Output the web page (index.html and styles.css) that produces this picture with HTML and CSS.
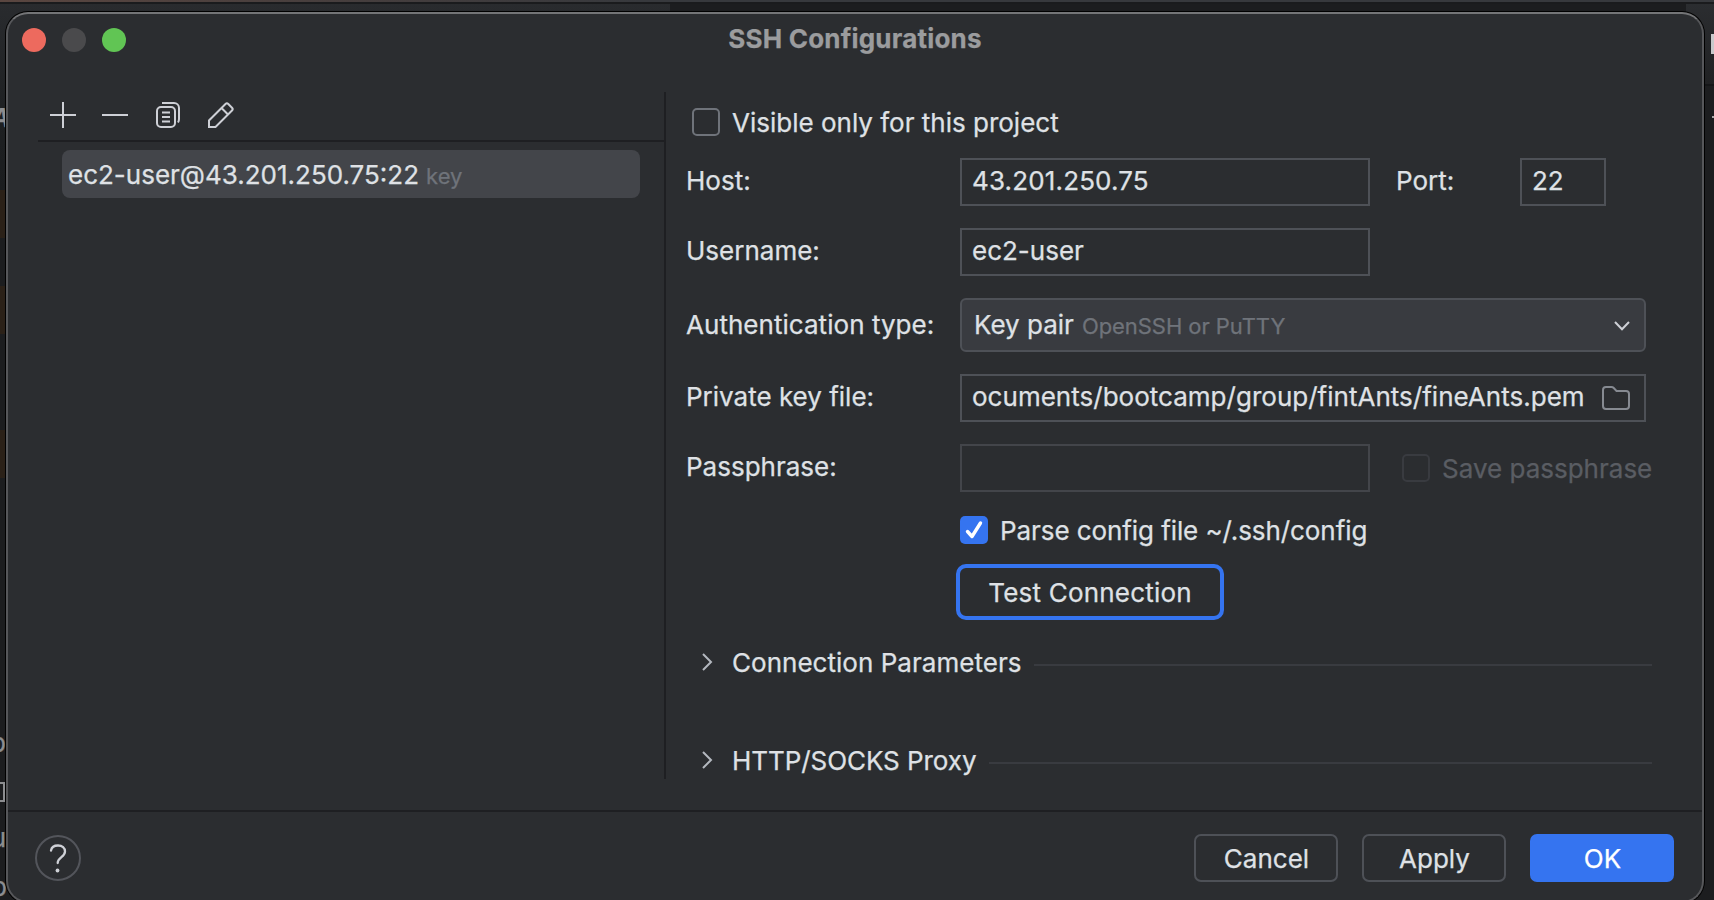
FILE: index.html
```html
<!DOCTYPE html>
<html lang="en">
<head>
<meta charset="utf-8">
<title>SSH Configurations</title>
<link rel="stylesheet" href="styles.css">
</head>
<body>
<div class="backdrop">
  <div class="strip"></div>
  <div class="pane pane-left"></div>
  <div class="pane pane-right"></div>
  <div class="mark mark-1"></div>
  <div class="mark mark-2"></div>
  <div class="mark mark-3"></div>
  <span class="frag frag-a">A</span>
  <span class="frag frag-p">p</span>
  <span class="frag-box"></span>
  <span class="frag frag-u">u</span>
  <span class="frag frag-o">p</span>
  <span class="frag-e"></span>
  <span class="frag-line"></span>
  <span class="frag-dash"></span>
</div>

<div class="window">
  <header class="titlebar">
    <div class="lights"><i class="light red"></i><i class="light grey"></i><i class="light green"></i></div>
    <h1 class="title">SSH Configurations</h1>
  </header>

  <div class="main">
    <aside class="sidebar">
      <div class="toolbar">
        <svg class="tool" viewBox="0 0 32 32"><path d="M16 3v26M3 16h26"/></svg>
        <svg class="tool" viewBox="0 0 32 32"><path d="M3 16h26"/></svg>
        <svg class="tool" viewBox="0 0 32 32"><rect x="5" y="8" width="18" height="20" rx="4"/><path d="M10 4h12a5 5 0 0 1 5 5v11q0 2-1 3.500M10 13.500h8M10 18h8M10 22.500h8"/></svg>
        <svg class="tool" viewBox="0 0 32 32"><path d="M5 28v-6.500L21.500 5a2 2 0 0 1 2.800 0L28 8.700a2 2 0 0 1 0 2.800L11.500 28zM17.500 9l6.500 6.500"/></svg>
      </div>
      <div class="item"><span class="item-name">ec2-user@43.201.250.75:22</span><span class="hint item-hint">key</span></div>
    </aside>

    <section class="form">
      <label class="check visible-check"><span class="box"></span><span class="t-visible">Visible only for this project</span></label>

      <div class="row">
        <span class="label">Host:</span><div class="field medium host">43.201.250.75</div>
        <span class="label port-label">Port:</span><div class="field port">22</div>
      </div>
      <div class="row"><span class="label">Username:</span><div class="field medium">ec2-user</div></div>
      <div class="row combo-row">
        <span class="label combo-label">Authentication type:</span>
        <div class="combo"><span>Key pair</span><span class="hint combo-hint">OpenSSH or PuTTY</span>
          <svg class="chevron-down" viewBox="0 0 18 12"><path d="M2 2l7 7.300L16 2"/></svg></div>
      </div>
      <div class="row">
        <span class="label">Private key file:</span>
        <div class="field wide"><span class="path">ocuments/bootcamp/group/fintAnts/fineAnts.pem</span>
          <svg class="folder" viewBox="0 0 28 24"><path d="M1 4a3 3 0 0 1 3-3h5.500q1.200 0 2 .8L14.500 5H24a3 3 0 0 1 3 3v12a3 3 0 0 1-3 3H4a3 3 0 0 1-3-3z"/></svg></div>
      </div>
      <div class="row">
        <span class="label">Passphrase:</span><div class="field medium disabled"></div>
        <label class="check save-check"><span class="box"></span><span class="t-save">Save passphrase</span></label>
      </div>
      <label class="check parse-check"><span class="box checked"><svg viewBox="0 0 28 28"><path d="M7.500 15.500l4.500 5L20.500 7"/></svg></span><span class="t-parse">Parse config file ~/.ssh/config</span></label>
      <button class="test">Test Connection</button>

      <div class="group"><svg class="chevron" viewBox="0 0 12 20"><path d="M2 2l8 8-8 8"/></svg><span class="group-name">Connection Parameters</span><i class="rule"></i></div>
      <div class="group second"><svg class="chevron" viewBox="0 0 12 20"><path d="M2 2l8 8-8 8"/></svg><span class="group-name">HTTP/SOCKS Proxy</span><i class="rule"></i></div>
    </section>
  </div>

  <footer class="footer">
    <svg class="help" viewBox="0 0 46 46"><circle cx="23" cy="23" r="22"/><path d="M16 15.500c.6-3.300 3.200-5 7-5 4.200 0 7 2.500 7 6 0 5.500-7.300 5.800-7.300 11.500"/><circle class="dot" cx="22.500" cy="35.500" r="1.900"/></svg>
    <div class="buttons"><button class="btn">Cancel</button><button class="btn">Apply</button><button class="btn primary">OK</button></div>
  </footer>
</div>
</body>
</html>
```
FILE: styles.css
```css
* { box-sizing: border-box; }
body {
  margin: 0;
  width: 1714px;
  height: 900px;
  overflow: hidden;
  position: relative;
  background: #1c1d1f;
  color: #dfe1e5;
  font: 26px/32px Inter, "Liberation Sans", sans-serif;
  -webkit-text-stroke: 0.25px currentColor;
}
svg { display: block; fill: none; flex: none; }
h1, button { margin: 0; font: inherit; color: inherit; }

/* Editor showing around the dialog */
.backdrop { position: absolute; inset: 0; overflow: hidden; }
.backdrop > * { position: absolute; }
.strip { left: 0; top: 0; width: 1714px; height: 4px; border-bottom: 2px solid #1a1b1d; background: linear-gradient(90deg, #5a4640 0, #4b403e 250px, #37393d 640px, #37393d 100%); }
.pane-left { left: 0; top: 4px; width: 670px; height: 186px; background: linear-gradient(#292b2e, #1e2022 60%, #1b1d1f); }
.pane-right { left: 1686px; top: 4px; width: 28px; height: 80px; background: linear-gradient(#2b2d30, #202123); }
.mark { left: 0; width: 6px; height: 48px; background: #2b2118; }
.mark-1 { top: 190px; }
.mark-2 { top: 286px; }
.mark-3 { top: 430px; }
.frag { color: #8c8d90; width: 18px; text-align: right; left: -13px; }
.frag-a { top: 102px; font-style: italic; font-weight: 600; left: -9px; }
.frag-p { top: 727px; left: -12px; }
.frag-u { top: 822px; left: -12px; }
.frag-o { top: 871px; left: -11px; }
.frag-box { left: -10px; top: 782px; width: 15px; height: 20px; border: 2px solid #8c8d90; }
.frag-e { left: 1711px; top: 34px; width: 3px; height: 20px; background: #c8c9cb; }
.frag-line { left: 1704px; top: 84px; width: 10px; height: 2px; background: #151618; }
.frag-dash { left: 1712px; top: 116px; width: 2px; height: 2px; background: #a5a6a8; }

.window {
  position: absolute;
  left: 6px;
  top: 12px;
  width: 1698px;
  height: 891px;
  display: flex;
  flex-direction: column;
  background: #2b2d30;
  border: 2px solid #56575a;
  border-top-color: #747577;
  border-radius: 22px;
  box-shadow: 0 0 0 1px #000;
}

.titlebar { height: 78px; flex: none; display: grid; grid-template-columns: 1fr auto 1fr; align-items: start; }
.lights { display: flex; gap: 16px; padding: 14px 0 0 14px; }
.light { width: 24px; height: 24px; border-radius: 50%; }
.red { background: #ed6a5e; }
.grey { background: #4a4a4c; }
.green { background: #61c554; }
.title { margin-top: 9px; font-weight: 700; color: #9b9c9e; letter-spacing: 0.2px; }

.main { display: flex; height: 687px; flex: none; }
.sidebar { width: 658px; padding-left: 30px; border-right: 2px solid #1e1f22; }
.toolbar { height: 50px; display: flex; gap: 20.300px; padding: 7px 0 0 9px; border-bottom: 2px solid #1e1f22; }
.tool { width: 32px; height: 32px; stroke: #ced0d6; stroke-width: 2; }
.item { display: flex; align-items: center; gap: 7px; width: 578px; height: 48px; margin: 8px 0 0 24px; padding: 2px 0 0 6px; border-radius: 8px; background: #43454a; white-space: nowrap; }
.hint { font-size: 22px; color: #6f737a; }
.item-hint { padding-top: 1px; }

.form { width: 990px; padding: 16px 0 0 20px; white-space: nowrap; }
.check { display: flex; align-items: center; height: 28px; gap: 12px; }
.check > span + span { padding-top: 2px; }
.box { width: 28px; height: 28px; flex: none; border: 2px solid #6f737a; border-radius: 5px; }
.box.checked { border: 0; background: #3574f0; }
.checked path { stroke: #fff; stroke-width: 3.400; stroke-linecap: round; stroke-linejoin: round; }
.visible-check { margin: 0 0 22px 6px; }
.row { display: flex; align-items: center; margin-bottom: 22px; }
.label { width: 274px; padding-bottom: 3px; }
.combo-label { padding-bottom: 1px; letter-spacing: 0.04px; }
.field { height: 48px; display: flex; align-items: center; padding: 0 0 3px 10px; border: 2px solid #4e5157; }
.medium { width: 410px; }
.host { letter-spacing: 0.15px; }
.port-label { width: 124px; margin-left: 26px; }
.port { width: 86px; }
.wide { width: 686px; justify-content: space-between; padding-right: 14px; }
.path { letter-spacing: 0.02px; }
.folder { width: 28px; height: 24px; stroke: #868a91; stroke-width: 2; margin-top: 3px; }
.combo { width: 686px; height: 54px; display: flex; align-items: center; padding: 0 13px 1px 12px; border: 2px solid #4e5157; border-radius: 6px; background: #393b40; }
.combo-hint { margin-left: 8px; padding-top: 2px; letter-spacing: -0.05px; }
.chevron-down { width: 18px; height: 12px; margin: 2px 0 0 auto; stroke: #ced0d6; stroke-width: 2; }
.disabled { border-color: #43454a; }
.save-check { margin-left: 32px; color: #5a5d63; }
.save-check .box { border-color: #393b40; }
.parse-check { margin: 24px 0 20px 274px; }
.t-parse { letter-spacing: -0.08px; }
.test { display: block; width: 268px; height: 56px; margin-left: 270px; padding: 2px 0 0; border: 4px solid #3574f0; border-radius: 10px; background: transparent; letter-spacing: 0.2px; }

.group { display: flex; align-items: center; height: 32px; margin-top: 26px; padding-left: 15px; }
.group-name { padding-top: 2px; letter-spacing: 0.03px; }
.chevron { width: 12px; height: 20px; stroke: #b4b8bf; stroke-width: 2; margin-right: 19px; }
.second { margin-top: 66px; }
.second .group-name { letter-spacing: -0.06px; }
.rule { flex: 1; height: 2px; margin: 5px 4px 0 13px; background: #393b40; }

.footer { margin-top: 31px; height: 93px; flex: none; display: flex; justify-content: space-between; border-top: 2px solid #1e1f22; padding: 22px 28px 0 27px; }
.help { width: 46px; height: 46px; margin-top: 1px; stroke: #ced0d6; stroke-width: 2.300; stroke-linecap: round; }
.help circle { stroke: #53555b; stroke-width: 2; }
.help .dot { fill: #ced0d6; stroke: none; }
.buttons { display: flex; gap: 24px; }
.btn { width: 144px; height: 48px; padding: 2px 0 0 1px; border: 2px solid #4e5157; border-radius: 7px; background: transparent; }
.primary { border-color: #3574f0; background: #3574f0; color: #fff; }
```
